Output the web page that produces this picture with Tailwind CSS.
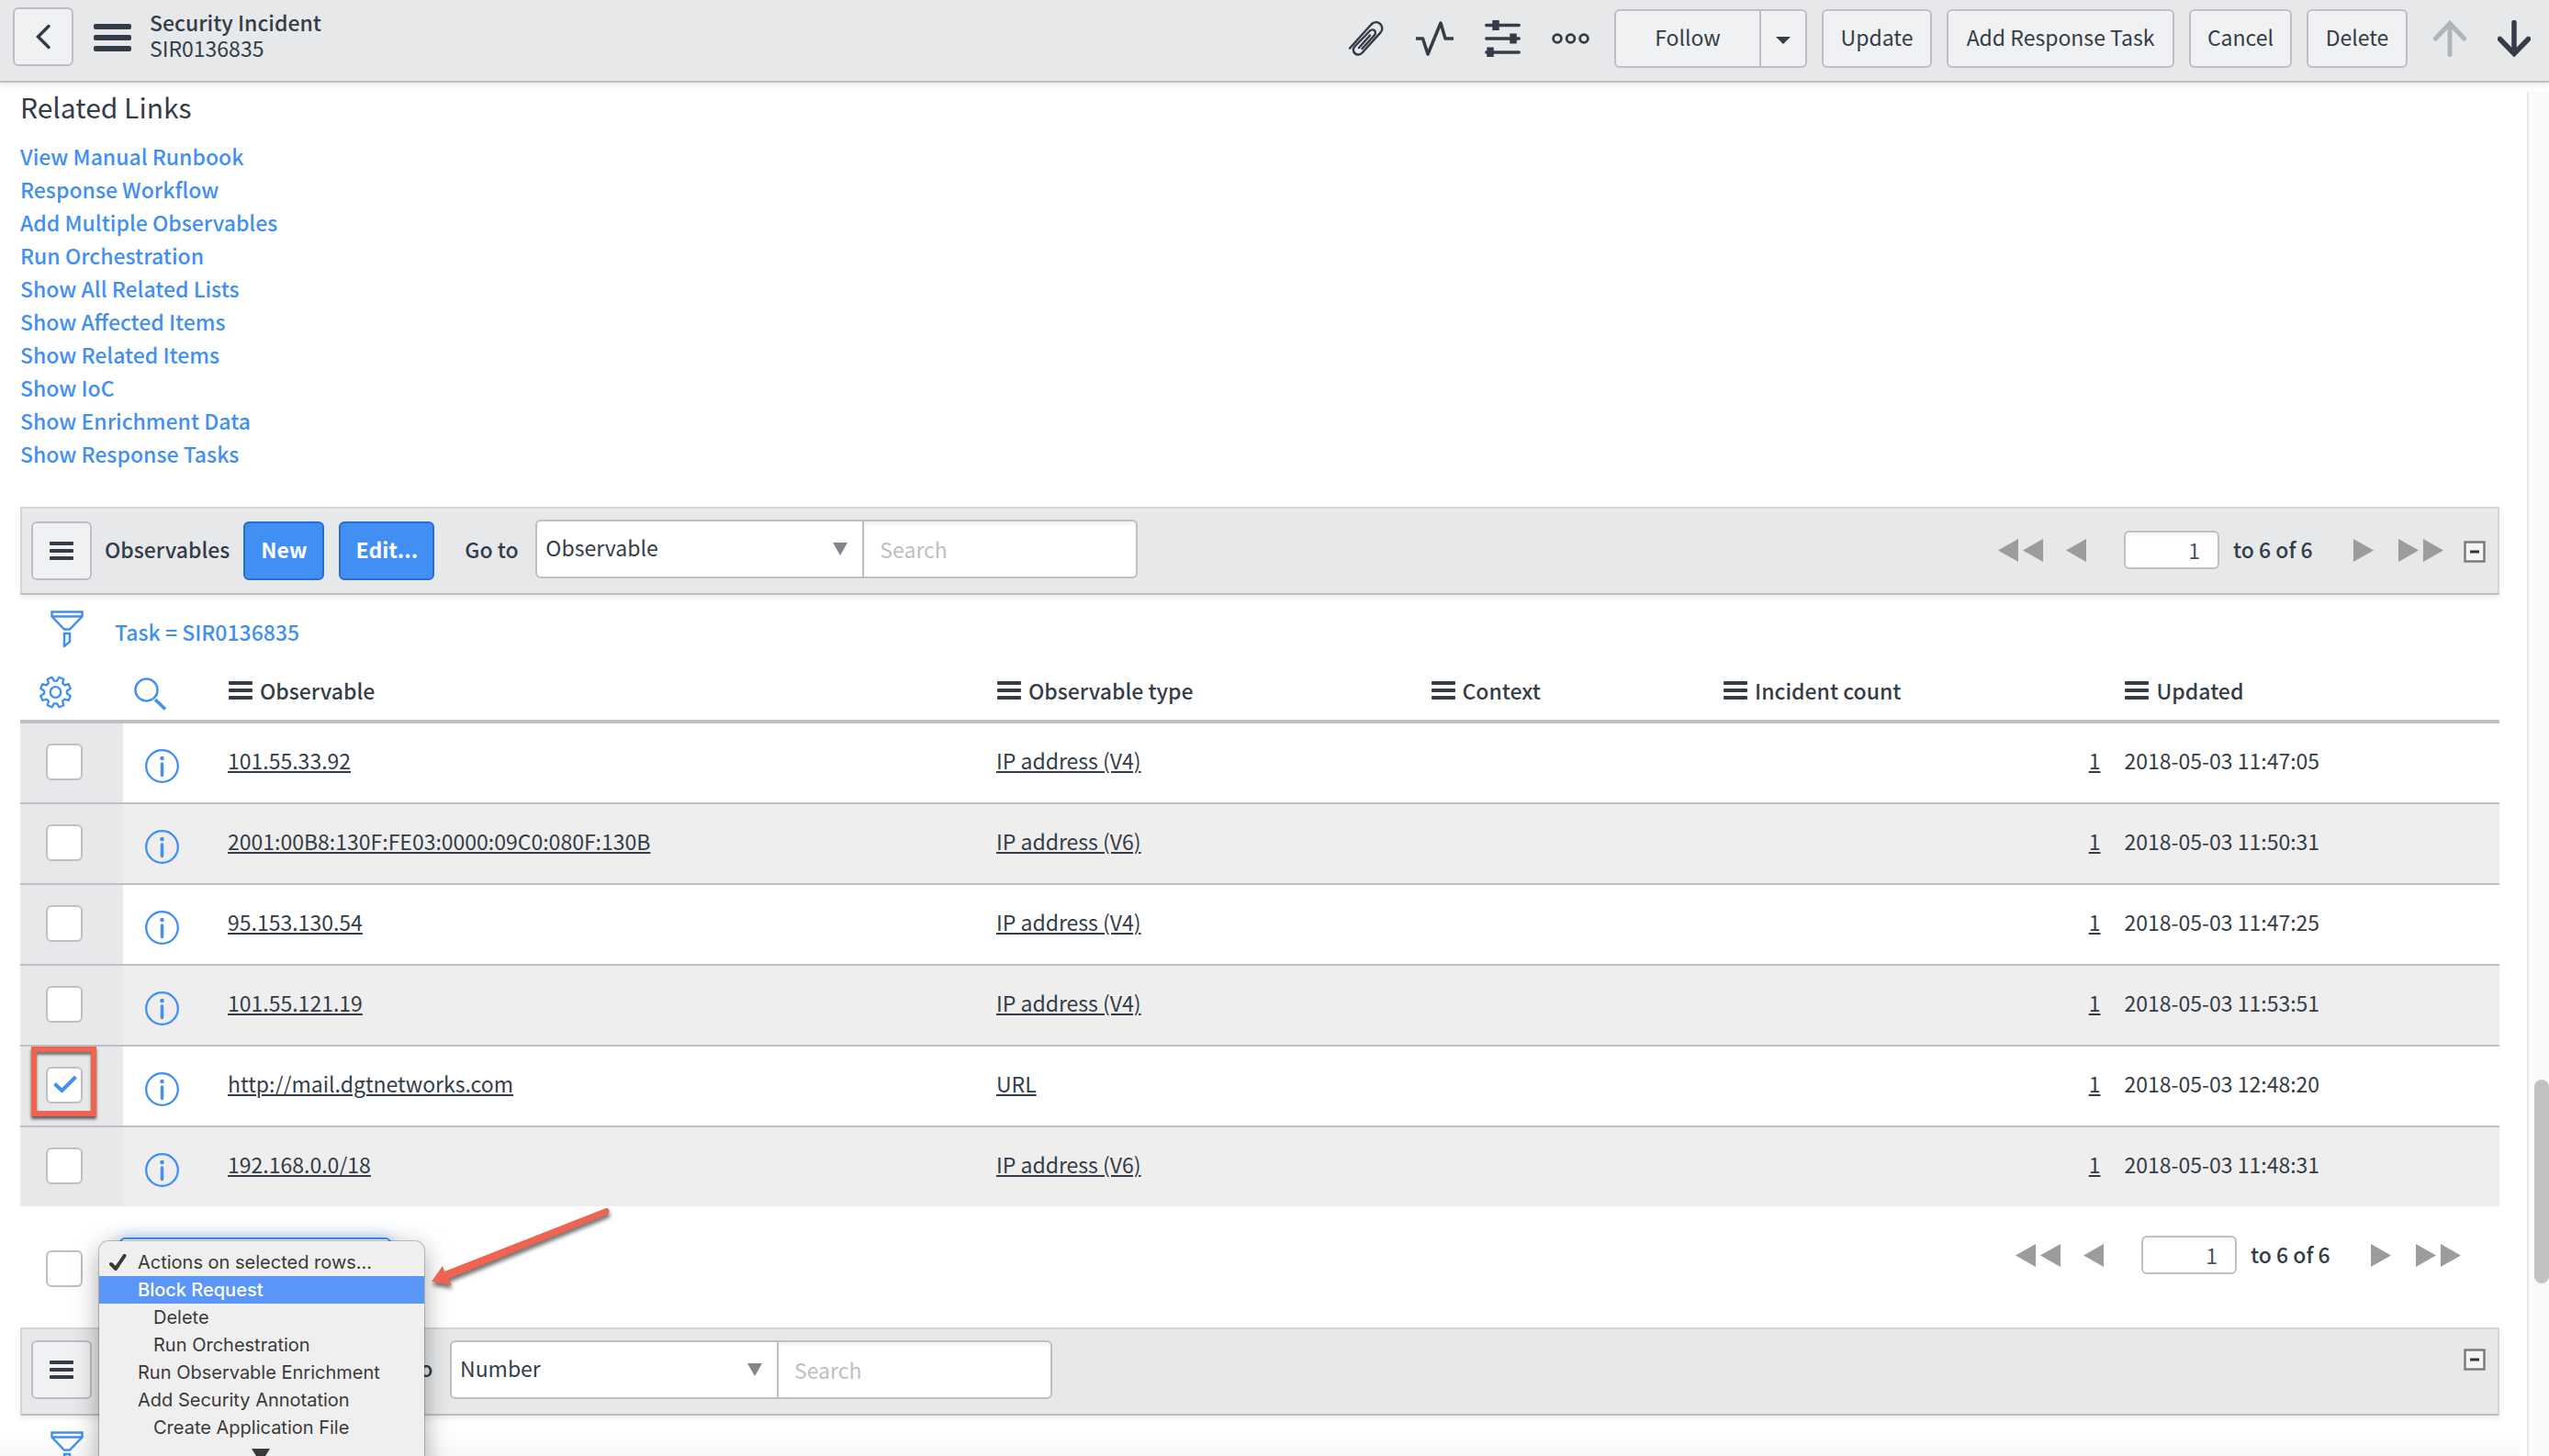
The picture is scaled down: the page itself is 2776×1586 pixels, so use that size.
<!DOCTYPE html>
<html lang="en">
<head>
<meta charset="utf-8">
<title>Security Incident SIR0136835</title>
<script src="https://cdn.jsdelivr.net/npm/@tailwindcss/browser@4"></script>
</head>
<body class="flex h-screen flex-col overflow-hidden bg-white font-['Noto_Sans_CJK_SC',sans-serif] text-[23px] leading-8 text-[#343d47]">

<svg class="hidden" aria-hidden="true">
  <symbol id="bars" viewBox="0 0 26 20"><g fill="currentColor"><rect width="26" height="4" rx="1"/><rect y="8" width="26" height="4" rx="1"/><rect y="16" width="26" height="4" rx="1"/></g></symbol>
  <symbol id="funnel" viewBox="0 0 36 40"><path d="M1.5 1.5h33v5L21 20.500h-6L1.500 6.500zM1.500 6.500h33M15 25h6v9l-6 5z" fill="none" stroke="currentColor" stroke-width="2.500"/></symbol>
  <symbol id="info" viewBox="0 0 37 37"><circle cx="18.500" cy="18.500" r="17.300" fill="none" stroke="currentColor" stroke-width="2.300"/><circle cx="18.500" cy="10" r="2.300" fill="currentColor"/><path d="M18.500 16v12.500" stroke="currentColor" stroke-width="3.500" stroke-linecap="round"/></symbol>
  <symbol id="prev" viewBox="0 0 22 25"><path d="M22 0v25L0 12.500z" fill="#9c9c9c"/></symbol>
  <symbol id="next" viewBox="0 0 22 25"><path d="M0 0v25l22-12.500z" fill="#9c9c9c"/></symbol>
  <symbol id="first" viewBox="0 0 49 25"><path d="M22 0v25L0 12.500zM49 0v25L27 12.500z" fill="#9c9c9c"/></symbol>
  <symbol id="last" viewBox="0 0 49 25"><path d="M0 0v25l22-12.500zM27 0v25l22-12.500z" fill="#9c9c9c"/></symbol>
  <symbol id="minus" viewBox="0 0 24 24"><rect x="1.500" y="1.500" width="21" height="21" fill="#f4f4f4" stroke="#7c7c7c" stroke-width="2.500"/><path d="M7 12h10" stroke="#333" stroke-width="3"/></symbol>
</svg>

<header class="relative z-10 flex h-[90px] shrink-0 items-start border-b-2 border-[#bdbfc3] bg-[#e6e8ea] pr-5 pl-[14px] shadow-[0_2px_8px_rgba(0,0,0,0.1)]">
  <button aria-label="Back" class="mt-2 flex h-16 w-[66px] items-center justify-center rounded-md border-2 border-[#bdbfc3] bg-[#f0f1f3]">
    <svg class="h-7 w-5" viewBox="0 0 20 28" fill="none" stroke="currentColor" stroke-width="3.500" stroke-linecap="round"><path d="M16 2.500 4.500 14 16 25.500"/></svg>
  </button>
  <button aria-label="Form menu" class="mt-[26px] ml-[22px]">
    <svg class="h-[30px] w-[41px]" viewBox="0 0 41 30" fill="currentColor"><rect width="41" height="6" rx="2"/><rect y="12" width="41" height="6" rx="2"/><rect y="24" width="41" height="6" rx="2"/></svg>
  </button>
  <div class="mt-[10px] ml-5 leading-7">
    <h1 class="font-medium">Security Incident</h1>
    <p>SIR0136835</p>
  </div>
  <div class="mt-[10px] ml-auto flex h-16 items-center">
    <button aria-label="Attachments">
      <svg class="h-10 w-10" viewBox="0 0 40 40" fill="none" stroke="currentColor" stroke-width="2.500" stroke-linecap="round" stroke-linejoin="round"><path d="M2 30.500 25.500 4.500c3-3 7-3 9.500-.7s3.300 6.500.5 9.500L15.500 35.500c-2.500 2.800-6 2.500-8 .5s-2.200-5 0-7.500L24 11.500c1.400-1.500 3.800-1.300 4.900-.3s1.300 3.500 0 5L15.500 31M12 30 24 16.500"/></svg>
    </button>
    <button aria-label="Activity" class="ml-[34px]">
      <svg class="h-10 w-[41px]" viewBox="0 0 41 40" fill="none" stroke="currentColor" stroke-width="3.500" stroke-linejoin="round"><path d="M0 20h7.500l5.500 17L27 3l5 17h9"/></svg>
    </button>
    <button aria-label="Personalize form" class="ml-[34px]">
      <svg class="h-10 w-[39px]" viewBox="0 0 39 40" fill="none" stroke="currentColor"><g stroke-width="3.300" stroke-linecap="round"><path d="M1.700 5.500h35.600M1.700 20h35.600M1.700 35h35.600"/></g><path d="M12 0v11M31 14.500v11M6 29.500v11" stroke-width="7.500"/></svg>
    </button>
    <button aria-label="More options" class="ml-[34px]">
      <svg class="h-3 w-[41px]" viewBox="0 0 41 12" fill="none" stroke="currentColor" stroke-width="2.800"><circle cx="6" cy="6" r="4.400"/><circle cx="20.500" cy="6" r="4.400"/><circle cx="35" cy="6" r="4.400"/></svg>
    </button>
    <div class="ml-[27px] flex h-16 w-[210px] rounded-md border-2 border-[#bdbfc3] bg-[#f0f1f3]">
      <button class="flex-1 pb-1">Follow</button>
      <button aria-label="Follow options" class="flex w-[50px] items-center justify-center border-l-2 border-[#bdbfc3]">
        <svg class="mt-1 h-2 w-4" viewBox="0 0 16 8"><path d="M0 0h16L8 8z" fill="currentColor"/></svg>
      </button>
    </div>
    <button class="ml-4 h-16 w-[120px] rounded-md border-2 border-[#bdbfc3] bg-[#f0f1f3] pb-1">Update</button>
    <button class="ml-4 h-16 w-[248px] rounded-md border-2 border-[#bdbfc3] bg-[#f0f1f3] pb-1">Add Response Task</button>
    <button class="ml-4 h-16 w-[112px] rounded-md border-2 border-[#bdbfc3] bg-[#f0f1f3] pb-1">Cancel</button>
    <button class="ml-4 h-16 w-[110px] rounded-md border-2 border-[#bdbfc3] bg-[#f0f1f3] pb-1">Delete</button>
    <button aria-label="Previous record" class="ml-[28px] text-[#b0b4b9]" disabled>
      <svg class="h-10 w-9" viewBox="0 0 36 40" fill="none" stroke="currentColor" stroke-width="5" stroke-linecap="round"><path d="M18 4v33.500M2.500 20 18 3.500 33.500 20"/></svg>
    </button>
    <button aria-label="Next record" class="ml-[34px]">
      <svg class="h-10 w-9" viewBox="0 0 36 40" fill="none" stroke="currentColor" stroke-width="5.500" stroke-linecap="round"><path d="M18 2.500V36M2.500 20.500 18 36.500l15.500-16"/></svg>
    </button>
  </div>
</header>

<div class="flex min-h-0 flex-1">
  <main class="min-w-0 flex-1 overflow-hidden pr-[30px] pl-[22px]">
    <h2 class="mt-2 text-[30px] leading-9">Related Links</h2>
    <ul class="mt-[18px] leading-9 font-medium text-[#428ff4]">
      <li><a href="#">View Manual Runbook</a></li>
      <li><a href="#">Response Workflow</a></li>
      <li><a href="#">Add Multiple Observables</a></li>
      <li><a href="#">Run Orchestration</a></li>
      <li><a href="#">Show All Related Lists</a></li>
      <li><a href="#">Show Affected Items</a></li>
      <li><a href="#">Show Related Items</a></li>
      <li><a href="#">Show IoC</a></li>
      <li><a href="#">Show Enrichment Data</a></li>
      <li><a href="#">Show Response Tasks</a></li>
    </ul>

    <section aria-label="Observables">
      <div class="mt-10 flex h-24 items-start border-2 border-[#d3d5d8] border-b-[#bdbfc3] bg-[#e6e8ea] pr-[13px] pl-[10px] shadow-[0_3px_6px_rgba(0,0,0,0.08)]">
        <button aria-label="List menu" class="mt-[14px] flex h-16 w-[66px] items-center justify-center rounded-md border-2 border-[#bdbfc3] bg-[#f0f1f3]"><svg class="h-5 w-[26px]"><use href="#bars"/></svg></button>
        <h3 class="mt-[28px] ml-[14px] font-medium">Observables</h3>
        <button class="mt-[14px] ml-[15px] h-16 w-[88px] rounded-md border-2 border-[#2a6cd3] bg-[#428ff4] pb-1 font-bold text-white">New</button>
        <button class="mt-[14px] ml-4 h-16 w-[104px] rounded-md border-2 border-[#2a6cd3] bg-[#428ff4] pb-1 font-bold text-white">Edit...</button>
        <label for="goto1" class="mt-[28px] ml-[33px] w-[77px] font-medium">Go to</label>
        <div class="relative mt-3">
          <select id="goto1" class="h-16 w-[358px] appearance-none rounded-l-md border-2 border-[#bdbfc3] bg-white pb-1 pl-[9px]"><option>Observable</option></select>
          <svg class="pointer-events-none absolute top-[25px] right-[18px] h-[14px] w-4" viewBox="0 0 16 14"><path d="M0 0h16L8 14z" fill="#81868c"/></svg>
        </div>
        <input aria-label="Search observables" placeholder="Search" class="mt-3 h-16 w-[298px] rounded-r-md border-2 border-l-0 border-[#bdbfc3] bg-white pl-[17px] shadow-[inset_0_3px_4px_rgba(0,0,0,0.05)] placeholder:text-[#bdbfc3]">
        <div class="mt-6 ml-auto flex h-[42px] items-center">
          <button aria-label="First page"><svg class="h-[25px] w-[49px]"><use href="#first"/></svg></button>
          <button aria-label="Previous page" class="ml-[25px]"><svg class="h-[25px] w-[22px]"><use href="#prev"/></svg></button>
          <input aria-label="Go to row" value="1" class="ml-[41px] h-[42px] w-[104px] rounded-md border-2 border-[#bdbfc3] bg-white pr-[19px] text-right text-[#485466] shadow-[inset_0_3px_4px_rgba(0,0,0,0.05)]">
          <span class="ml-[15px] w-[92px] pb-[2px] font-medium whitespace-nowrap">to 6 of 6</span>
          <button aria-label="Next page" class="ml-[39px]"><svg class="h-[25px] w-[22px]"><use href="#next"/></svg></button>
          <button aria-label="Last page" class="ml-[27px]"><svg class="h-[25px] w-[49px]"><use href="#last"/></svg></button>
          <button aria-label="Collapse list" class="ml-[22px]"><svg class="mt-1 h-6 w-6"><use href="#minus"/></svg></button>
        </div>
      </div>

      <div class="flex h-[70px] items-start pl-[33px] text-[#428ff4]">
        <button aria-label="Filter" class="mt-[17px]"><svg class="h-10 w-9"><use href="#funnel"/></svg></button>
        <a href="#" class="mt-6 ml-[34px] font-medium">Task = SIR0136835</a>
      </div>

      <table class="w-full table-fixed border-separate border-spacing-0 text-left">
        <colgroup><col class="w-[112px]"><col class="w-[98px]"><col class="w-[31%]"><col class="w-[17.5%]"><col class="w-[11.8%]"><col class="w-[16.2%]"><col></colgroup>
        <thead>
          <tr class="h-[70px] align-top [&>th]:border-b-4 [&>th]:border-[#bdbfc3]">
            <th class="pt-[18px] pl-5 text-[#428ff4]"><button aria-label="Personalize list" class="block">
              <svg class="h-9 w-[37px]" viewBox="0 0 36 36" fill="none" stroke="currentColor" stroke-width="2.300" stroke-linejoin="round"><circle cx="18" cy="18" r="5.800"/><path id="gear"/></svg></button></th>
            <th class="pt-5 pl-3 text-[#428ff4]"><button aria-label="Search columns" class="block"><svg class="h-9 w-9" viewBox="0 0 36 36" fill="none" stroke="currentColor"><circle cx="13.500" cy="13.500" r="12" stroke-width="2.500"/><path d="M23 24 34 34.500" stroke-width="3.500"/></svg></button></th>
            <th class="pt-[18px] pl-[17px] font-medium"><span class="flex items-center gap-2"><svg class="h-5 w-[26px]"><use href="#bars"/></svg>Observable</span></th>
            <th class="pt-[18px] pl-[17px] font-medium"><span class="flex items-center gap-2"><svg class="h-5 w-[26px]"><use href="#bars"/></svg>Observable type</span></th>
            <th class="pt-[18px] pl-[17px] font-medium"><span class="flex items-center gap-2"><svg class="h-5 w-[26px]"><use href="#bars"/></svg>Context</span></th>
            <th class="pt-[18px] pl-[17px] font-medium"><span class="flex items-center gap-2"><svg class="h-5 w-[26px]"><use href="#bars"/></svg>Incident count</span></th>
            <th class="pt-[18px] pl-[17px] font-medium"><span class="flex items-center gap-2"><svg class="h-5 w-[26px]"><use href="#bars"/></svg>Updated</span></th>
          </tr>
        </thead>
        <tbody id="rows"></tbody>
      </table>

      <div class="flex h-[132px] items-start pr-[42px] pl-7">
        <input type="checkbox" aria-label="Select all rows" class="mt-12 h-10 w-10 appearance-none rounded-md border-2 border-[#bdbfc3] bg-white">
        <div class="relative z-10 mt-[34px] ml-10">
          <select aria-label="Actions on selected rows" class="h-16 w-[296px] appearance-none rounded-md border-2 border-[#428ff4] bg-white pl-3 shadow-[0_0_16px_rgba(66,143,244,0.5)]"><option></option></select>
          <ul role="listbox" aria-label="Actions" class="absolute top-1 -left-[22px] h-[300px] w-[354px] rounded-t-[10px] bg-[#efefef] pt-2 font-[Inter,sans-serif] text-[20px] leading-[30px] whitespace-nowrap text-[#3a3a3a] shadow-[0_0_0_1px_rgba(0,0,0,0.2),0_8px_28px_rgba(0,0,0,0.35)]">
            <li role="option" aria-selected="true" class="flex items-center pl-[11px]"><svg class="mr-3 h-[18px] w-[19px]" viewBox="0 0 19 18" fill="none" stroke="currentColor" stroke-width="4" stroke-linecap="round"><path d="m2 11 5 5L16.500 2"/></svg>Actions on selected rows...</li>
            <li role="option" class="bg-[#5a96f8] pl-[42px] font-medium text-white">Block Request</li>
            <li role="option" class="pl-[59px]">Delete</li>
            <li role="option" class="pl-[59px]">Run Orchestration</li>
            <li role="option" class="pl-[42px]">Run Observable Enrichment</li>
            <li role="option" class="pl-[42px]">Add Security Annotation</li>
            <li role="option" class="pl-[59px]">Create Application File</li>
            <li role="presentation" class="pt-2 pl-[166px]"><svg class="h-4 w-5" viewBox="0 0 20 16"><path d="M0 0h20L10 16z" fill="currentColor"/></svg></li>
          </ul>
          <svg class="pointer-events-none absolute -top-[36px] left-[334px] h-[100px] w-[210px] drop-shadow-[1px_4px_2px_rgba(0,0,0,0.55)]" viewBox="0 0 210 100" aria-hidden="true"><path d="M6 84 18 67l2 6L196 4c4-1 5 5 1 7L24 81l4 7z" fill="#ee6450"/></svg>
        </div>
        <div class="mt-8 ml-auto flex h-[42px] items-center">
          <button aria-label="First page"><svg class="h-[25px] w-[49px]"><use href="#first"/></svg></button>
          <button aria-label="Previous page" class="ml-[25px]"><svg class="h-[25px] w-[22px]"><use href="#prev"/></svg></button>
          <input aria-label="Go to row" value="1" class="ml-[41px] h-[42px] w-[104px] rounded-md border-2 border-[#bdbfc3] bg-white pr-[19px] text-right text-[#485466] shadow-[inset_0_3px_4px_rgba(0,0,0,0.05)]">
          <span class="ml-[15px] w-[92px] pb-[2px] font-medium whitespace-nowrap">to 6 of 6</span>
          <button aria-label="Next page" class="ml-[39px]"><svg class="h-[25px] w-[22px]"><use href="#next"/></svg></button>
          <button aria-label="Last page" class="ml-[27px]"><svg class="h-[25px] w-[49px]"><use href="#last"/></svg></button>
        </div>
      </div>
    </section>

    <section aria-label="Tasks">
      <div class="flex h-24 items-start border-2 border-[#d3d5d8] border-b-[#bdbfc3] bg-[#e6e8ea] pr-[13px] pl-[10px] shadow-[0_3px_6px_rgba(0,0,0,0.08)]">
        <button aria-label="List menu" class="mt-3 flex h-16 w-[66px] items-center justify-center rounded-md border-2 border-[#bdbfc3] bg-[#f0f1f3]"><svg class="h-5 w-[26px]"><use href="#bars"/></svg></button>
        <label for="goto2" class="mt-[26px] ml-[313px] w-[77px] font-medium">Go to</label>
        <div class="relative mt-3">
          <select id="goto2" class="h-16 w-[358px] appearance-none rounded-l-md border-2 border-[#bdbfc3] bg-white pb-1 pl-[9px]"><option>Number</option></select>
          <svg class="pointer-events-none absolute top-[25px] right-[18px] h-[14px] w-4" viewBox="0 0 16 14"><path d="M0 0h16L8 14z" fill="#81868c"/></svg>
        </div>
        <input aria-label="Search tasks" placeholder="Search" class="mt-3 h-16 w-[298px] rounded-r-md border-2 border-l-0 border-[#bdbfc3] bg-white pl-[17px] shadow-[inset_0_3px_4px_rgba(0,0,0,0.05)] placeholder:text-[#bdbfc3]">
        <button aria-label="Collapse list" class="mt-[21px] ml-auto"><svg class="h-6 w-6"><use href="#minus"/></svg></button>
      </div>
      <div class="-mx-[22px] bg-linear-to-b from-white to-[#f4f4f4] pl-[55px] text-[#428ff4]">
        <button aria-label="Filter" class="mt-[17px] block"><svg class="h-10 w-9"><use href="#funnel"/></svg></button>
      </div>
    </section>
  </main>

  <div class="mt-[10px] flex w-6 flex-col items-end border-l-2 border-[#e6e6e8] bg-[#fafafa]" aria-hidden="true">
    <div class="mt-[1076px] h-[222px] w-4 rounded-full bg-[#c1c1c1]"></div>
  </div>
</div>

<script>
  const rows = [
    ['101.55.33.92', 'IP address (V4)', '2018-05-03 11:47:05'],
    ['2001:00B8:130F:FE03:0000:09C0:080F:130B', 'IP address (V6)', '2018-05-03 11:50:31'],
    ['95.153.130.54', 'IP address (V4)', '2018-05-03 11:47:25'],
    ['101.55.121.19', 'IP address (V4)', '2018-05-03 11:53:51'],
    ['http://mail.dgtnetworks.com', 'URL', '2018-05-03 12:48:20', true],
    ['192.168.0.0/18', 'IP address (V6)', '2018-05-03 11:48:31'],
  ];
  const link = t => `<a href="#" class="underline decoration-2 underline-offset-2">${t}</a>`;
  const mark = `<svg class="pointer-events-none absolute top-[9px] left-2 h-5 w-[26px] text-[#428ff4]" viewBox="0 0 26 20" fill="none" stroke="currentColor" stroke-width="4"><path d="m1.500 9.500 8 7.500L24.500 2"/></svg>
    <span class="pointer-events-none absolute -top-[22px] -left-4 h-[76px] w-[71px] border-[6px] border-[#ee6450] shadow-[0_3px_3px_rgba(0,0,0,0.6),inset_0_3px_3px_rgba(0,0,0,0.5)]"></span>`;
  document.getElementById('rows').innerHTML = rows.map(([name, type, date, on]) => `
    <tr class="h-[88px] align-top last:h-[86px] even:bg-[#eeeeee] [&>td]:border-[#bdbfc3] not-last:[&>td]:border-b-2">
      <td class="bg-[#e6e8ea] pt-[22px] pl-7"><div class="relative h-10 w-10"><input type="checkbox" aria-label="Select ${name}" ${on ? 'checked' : ''} class="block h-10 w-10 appearance-none rounded-md border-2 border-[#bdbfc3] bg-white">${on ? mark : ''}</div></td>
      <td class="pt-7 pl-6 text-[#428ff4]"><button aria-label="Preview ${name}" class="block"><svg class="h-[37px] w-[37px]"><use href="#info"/></svg></button></td>
      <td class="pt-6 pl-4">${link(name)}</td>
      <td class="pt-6 pl-4">${link(type)}</td>
      <td></td>
      <td class="pt-6 pr-[10px] text-right">${link('1')}</td>
      <td class="pt-6 pl-4">${date}</td>
    </tr>`).join('');

  // Eight-toothed gear outline
  const pts = [];
  for (let i = 0; i < 8; i++) {
    [[-15, 12.5], [-9, 16.8], [9, 16.8], [15, 12.5]].forEach(([o, r]) => {
      const a = (i * 45 + 22.5 + o) * Math.PI / 180;
      pts.push((18 + r * Math.cos(a)).toFixed(1) + ' ' + (18 + r * Math.sin(a)).toFixed(1));
    });
  }
  document.getElementById('gear').setAttribute('d', 'M' + pts.join('L') + 'Z');
</script>
</body>
</html>
